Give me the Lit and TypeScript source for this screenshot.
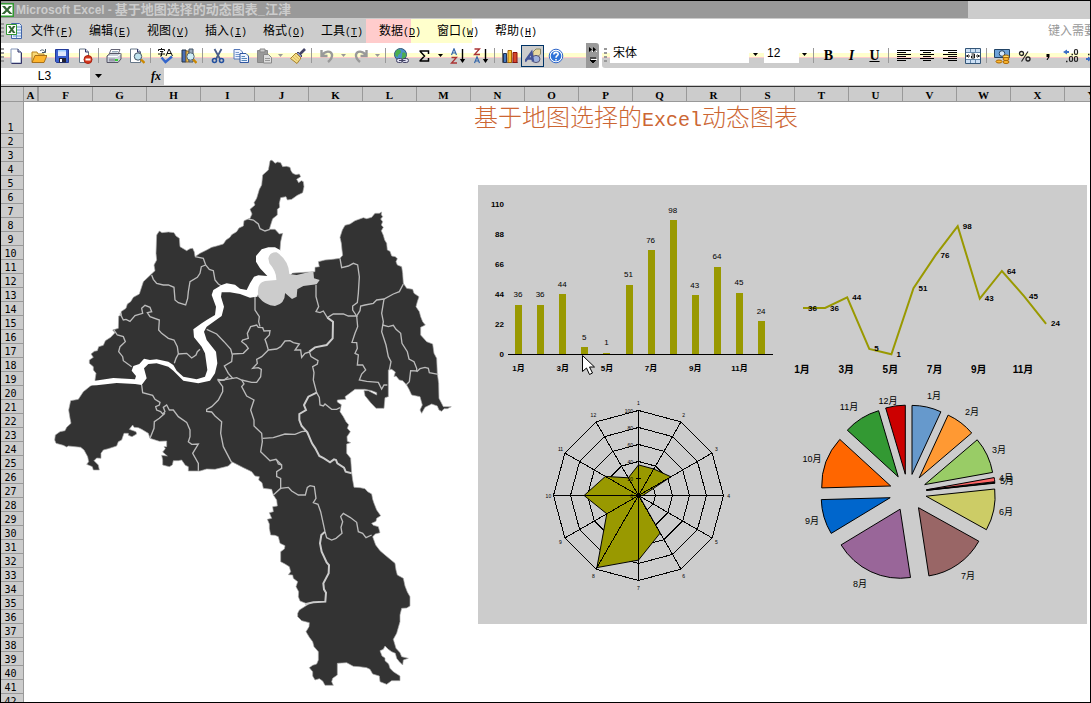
import { LitElement, html, svg, css } from "lit";
import { customElement } from "lit/decorators.js";

const VALUES = [36, 36, 44, 5, 1, 51, 76, 98, 43, 64, 45, 24];
const OLIVE = "#999900";

/* ---------- toolbar glyphs, each on a 16 x 16 grid ---------- */
const GLYPHS: Record<string, unknown> = {
  new: svg`<path d="M3 1h7l3 3v11H3z" fill="#fff" stroke="#8496b8"/><path d="M13.500 4.500v11H3.500" fill="none" stroke="#336"/><path d="M10 1v3h3" fill="#cde" stroke="#336"/>`,
  open: svg`<path d="M1 4h5l1 2h6v8H1z" fill="#f9d978" stroke="#b98320"/><path d="M1 14.500l3-7h12l-3 7z" fill="#fdb52e" stroke="#a8701a"/><path d="M9 3c2-2 4-1 5 1M14.500 1v3.500H11" fill="none" stroke="#456"/>`,
  save: svg`<path d="M1.500 1.500h13v13h-12l-1-1z" fill="#3a5fcd" stroke="#223a99"/><path d="M4 2h8v6H4z" fill="#dfe8fb"/><path d="M4 2h8v1.500H4z" fill="#9cf"/><path d="M5 10h7v4.500H5z" fill="#223"/><path d="M6 11h2v3H6z" fill="#fff"/>`,
  permit: svg`<path d="M2.500 1h6l3 3v10.500h-9z" fill="#fff" stroke="#678"/><path d="M8.500 1v3h3" fill="#cde" stroke="#336"/><circle cx="11" cy="11.500" r="4" fill="#d4381e" stroke="#a21"/><path d="M8.500 10.500h5v2h-5z" fill="#fff"/>`,
  print: svg`<path d="M5 1.500h9l-2 5H3z" fill="#fff" stroke="#667"/><path d="M6 3.500h6M5.500 5h6" stroke="#9ab"/><path d="M1 8l3-2.500h11V11l-3 3.500H1z" fill="#c9cfd8" stroke="#556"/><path d="M2 8.500h9.500l3-2.500" fill="none" stroke="#fff"/><path d="M3 10.500h6v3H3z" fill="#99a"/><path d="M9 11h3v2H9z" fill="#3c3"/>`,
  preview: svg`<path d="M1.500 1h7l3 3v10.500h-10z" fill="#fff" stroke="#678"/><path d="M8.500 1v3h3" fill="#cde" stroke="#336"/><circle cx="9" cy="8.500" r="3.700" fill="#bfe3ef" stroke="#456"/><path d="M12 11.500l3.500 3.500" stroke="#c80" stroke-width="2.400"/>`,
  spell: svg`<path d="M.5 3V1.500h6V3M2 3.500h3L3.500 5v3H2M0 6h7M3.500 0v1.500" fill="none" stroke="#111"/><path d="M8 8l3-7 3.500 7M9 5.500h4.500" fill="none" stroke="#111"/><path d="M3.500 9.500l4 4.500L14 8.500" fill="none" stroke="#36c" stroke-width="2.400"/>`,
  research: svg`<path d="M1 2h4v12H1z" fill="#4a6fb5" stroke="#234"/><path d="M5 3h3v11H5z" fill="#f0c04a" stroke="#863"/><path d="M8 1h4v13H8z" fill="#9ab" stroke="#456"/><circle cx="9.500" cy="8.500" r="3.700" fill="#cfeef5" stroke="#567"/><path d="M12.200 11.500l3.300 3.500" stroke="#c80" stroke-width="2.400"/>`,
  cut: svg`<path d="M4.500 1l5.500 10M11.500 1L6 11" fill="none" stroke="#4a5f88" stroke-width="1.800"/><circle cx="4.500" cy="12.500" r="2" fill="none" stroke="#23509e" stroke-width="1.600"/><circle cx="11.500" cy="12.500" r="2" fill="none" stroke="#23509e" stroke-width="1.600"/>`,
  copy: svg`<path d="M1 1.500h6l2.500 2.500v7H1z" fill="#eef3ff" stroke="#5578b8"/><path d="M2.500 4.500H6M2.500 6.500h5M2.500 8.500h5" stroke="#79c"/><path d="M7 5.500h6L15.500 8v6.500H7z" fill="#eef3ff" stroke="#2f569f"/><path d="M8.500 8.500H12M8.500 10.500h5.500M8.500 12.500h5.500" stroke="#58b"/>`,
  paste: svg`<path d="M1.500 2.500h10v12h-10z" fill="#999" stroke="#888"/><path d="M4 1h5v3H4z" fill="#ccc" stroke="#888"/><path d="M7.500 6.500h5l3 3v5.500h-8z" fill="#ddd" stroke="#888"/><path d="M9 10.500h5M9 12.500h5" stroke="#999"/>`,
  brush: svg`<path d="M15 1l-5 5" stroke="#446" stroke-width="2.600"/><path d="M8 4l4 4-1.500 1.500-4-4z" fill="#8a94c4" stroke="#446"/><path d="M6 5l5 5-4 5.500-6.500-5z" fill="#f5df8a" stroke="#a8812a"/><path d="M3 9l4.500 4M5 7.500l4.500 4" stroke="#dcb85a"/>`,
  undo: svg`<path d="M2.500 2v6h6M3 7.500C6 2.500 12 2.500 13 6.500c.5 3-1 5-4 7.500" fill="none" stroke="#999" stroke-width="2.400"/>`,
  redo: svg`<path d="M13.500 2v6h-6M13 7.500C10 2.500 4 2.500 3 6.500c-.5 3 1 5 4 7.500" fill="none" stroke="#999" stroke-width="2.400"/>`,
  link: svg`<circle cx="7.500" cy="6.500" r="6" fill="#4a90c8" stroke="#357"/><path d="M3 3c3-3 5-1 5 1s-3 2-3 4-3 0-3-2zM9 5c3-1 4 0 4 2s-3 5-4 4 1-3 0-6z" fill="#4cae4c"/><rect x="3.500" y="10.500" width="6" height="4" rx="2" fill="#dde" stroke="#446"/><rect x="9" y="10.500" width="6.500" height="4" rx="2" fill="#dde" stroke="#446"/><path d="M6 12.500h6.500" stroke="#446"/>`,
  sum: svg`<path d="M3.500 3h9v3M3.800 3l4.700 5-4.700 5M3.500 13h9v-3" fill="none" stroke="#000" stroke-width="1.500"/>`,
  az: svg`<path d="M1.500 7L4 .8 6.500 7M2.300 5h3.400" fill="none" stroke="#36a" stroke-width="1.200"/><path d="M1.500 9.500h5l-5 5.500h5.500" fill="none" stroke="#a33" stroke-width="1.300"/><path d="M12.500 1v12" stroke="#000" stroke-width="1.400"/><path d="M9.800 11h5.400l-2.700 4z"/>`,
  za: svg`<path d="M1.500 1h5l-5 5.500h5.500" fill="none" stroke="#a33" stroke-width="1.300"/><path d="M1.500 15L4 8.800 6.500 15M2.300 13h3.400" fill="none" stroke="#36a" stroke-width="1.200"/><path d="M12.500 1v12" stroke="#000" stroke-width="1.400"/><path d="M9.800 11h5.400l-2.700 4z"/>`,
  chart: svg`<path d="M.5 1v13.500H16" fill="none" stroke="#666"/><path d="M1.500 5.500h3v9h-3z" fill="#47b" stroke="#235"/><path d="M6 2.500h3.500v12H6z" fill="#f7c53c" stroke="#a60"/><path d="M11 4.500h4v10h-4z" fill="#d5482a" stroke="#811"/>`,
  draw: svg`<path d="M8 4l3-3h4.500v5l-3 3H8z" fill="#e8d9a0" stroke="#886"/><ellipse cx="11" cy="11" rx="4" ry="3.600" fill="#9fb2dd" stroke="#557"/><path d="M0 13.500L6.500 4.500 8 13.500M2.500 10.500h5" fill="none" stroke="#459" stroke-width="2.400"/>`,
  help: svg`<circle cx="8" cy="8" r="6.800" fill="#fff" stroke="#2c64c8"/><circle cx="8" cy="8" r="5.300" fill="#2f73d8"/><path d="M5.800 6.500C6 3.600 10.300 3.700 10.200 6.300 10.100 7.700 8 7.800 8 9.700M8 11v1.600" fill="none" stroke="#fff" stroke-width="1.600"/>`,
  left: svg`<path d="M1 2.500h14M1 4.500h9M1 6.500h14M1 8.500h9M1 10.500h14M1 12.500h9" stroke="#000"/>`,
  center: svg`<path d="M1 2.500h14M4 4.500h8M1 6.500h14M4 8.500h8M1 10.500h14M4 12.500h8" stroke="#000"/>`,
  right: svg`<path d="M1 2.500h14M6 4.500h9M1 6.500h14M6 8.500h9M1 10.500h14M6 12.500h9" stroke="#000"/>`,
  merge: svg`<path d="M.5.500h15v15H.5z" fill="#cde0f5" stroke="#357"/><path d="M1 4.500h14M1 11.500h14M5.500 1v3M10.500 1v3M5.500 12v3M10.500 12v3" stroke="#68a"/><path d="M1 5h14v6H1z" fill="#fff"/><path d="M1 8h4M11 8h4M3.500 6.500L2 8l1.500 1.500M12.500 6.500L14 8l-1.500 1.500M6.500 6h3v4h-3V8h3" fill="none" stroke="#111"/>`,
  money: svg`<path d="M.5 1.500h15v8H.5z" fill="#6fa3d8" stroke="#246"/><circle cx="8" cy="5.500" r="2.800" fill="#d5e8f8" stroke="#246"/><ellipse cx="12" cy="8.500" rx="3" ry="1.500" fill="#fd6" stroke="#a60"/><ellipse cx="12" cy="11" rx="3" ry="1.500" fill="#fb3" stroke="#a60"/><ellipse cx="12" cy="14" rx="3" ry="1.500" fill="#fb3" stroke="#a60"/><ellipse cx="5" cy="13.500" rx="3" ry="1.500" fill="#fb3" stroke="#a60"/>`,
  percent: svg`<circle cx="4.500" cy="5.500" r="2" fill="none" stroke="#222" stroke-width="1.300"/><circle cx="11" cy="11" r="2" fill="none" stroke="#222" stroke-width="1.300"/><path d="M11 3.500l-6.500 10" stroke="#222" stroke-width="1.100"/>`,
  comma: svg`<path d="M6.500 6h3v3l-2 3h-1L8 9H6.500z"/>`,
  decimal: svg`<path d="M4 1.500L0 4l4 2.500V5h2V3H4z" fill="#3b6fc4"/><path d="M8.500 6.500H10M3 13.500h1.500" stroke="#222" stroke-width="1.500"/><rect x="11.500" y="1.500" width="3" height="5" rx="1.400" fill="none" stroke="#222" stroke-width="1.200"/><rect x="6.500" y="8.500" width="3" height="5" rx="1.400" fill="none" stroke="#222" stroke-width="1.200"/><rect x="11.500" y="8.500" width="3" height="5" rx="1.400" fill="none" stroke="#222" stroke-width="1.200"/>`,
  fewer: svg`<path d="M2 8.500L6 11l-4 2.500V12H0v-2h2z" fill="#3b6fc4"/><path d="M2 6.500h1.500" stroke="#222" stroke-width="1.500"/><rect x="6.500" y="1.500" width="3" height="5" rx="1.400" fill="none" stroke="#222" stroke-width="1.200"/><rect x="11.500" y="1.500" width="3" height="5" rx="1.400" fill="none" stroke="#222" stroke-width="1.200"/>`,
};

type Tool = [kind: "b" | "s" | "d" | "sel" | "dim", id?: string, label?: string];
const STANDARD: Tool[] = [
  ["b", "new", "新建"], ["b", "open", "打开"], ["b", "save", "保存"], ["b", "permit", "权限"], ["s"],
  ["b", "print", "打印"], ["b", "preview", "打印预览"], ["s"],
  ["b", "spell", "拼写检查"], ["b", "research", "信息检索"], ["s"],
  ["b", "cut", "剪切"], ["b", "copy", "复制"], ["b", "paste", "粘贴"], ["dim", "", "粘贴选项"], ["b", "brush", "格式刷"], ["s"],
  ["b", "undo", "撤消"], ["dim", "", "撤消列表"], ["b", "redo", "恢复"], ["dim", "", "恢复列表"], ["s"],
  ["b", "link", "超链接"], ["b", "sum", "自动求和"], ["d", "", "求和选项"], ["b", "az", "升序"], ["b", "za", "降序"], ["s"],
  ["b", "chart", "图表向导"], ["sel", "draw", "绘图"], ["b", "help", "帮助"],
];

const ALIGNMENT: Tool[] = [
  ["b", "left", "左对齐"], ["b", "center", "居中"], ["b", "right", "右对齐"], ["b", "merge", "合并及居中"], ["s"],
  ["b", "money", "货币样式"], ["b", "percent", "百分比样式"], ["b", "comma", "千位分隔样式"],
  ["b", "decimal", "增加小数位数"], ["b", "fewer", "减少小数位数"],
];

const MENUS = [
  ["文件", "F"], ["编辑", "E"], ["视图", "V"], ["插入", "I"], ["格式", "O"],
  ["工具", "T"], ["数据", "D"], ["窗口", "W"], ["帮助", "H"],
];

const COLUMNS = "FGHIJKLMNOPQRSTUVWXY".split("");

/* ---------- map data: stretches digitised per tile, in thirds of a pixel ---------- */
type Stretch = [tile: keyof typeof TILES, points: string];
const TILES = { nw: [120, 450], ne: [720, 450], sw: [120, 1110], se: [690, 1200] };

const place = ([tile, points]: Stretch) => {
  const [dx, dy] = TILES[tile];
  return points
    .split(" ")
    .map((p) => p.split(",").map(Number))
    .map(([x, y]) => `${x + dx},${y + dy}`)
    .join(" ");
};

const OUTLINE: Stretch[] = [
  ["ne", "93,30 99,33 105,40 113,36 122,38 128,50 139,49 150,52 153,62 158,70 168,74 178,72 182,80 170,88 176,98 184,92 190,95 192,110 188,128 172,136 155,148 142,150 138,140 122,143 118,160 119,172 112,178 112,195 98,206 92,225 88,238 105,238 118,252 128,250 125,262 122,275 120,300 148,370 225,365 225,352 238,350 235,335 255,330 278,328 300,325 308,316 306,300 304,280 300,262 307,240 315,226 330,222 345,212 370,203 380,206 395,202 405,190 418,190 425,186 424,194 428,200 422,207 428,215 424,225 430,232 424,242 430,256 434,270 440,280 442,300 450,304 455,318 466,320 472,326 468,335 472,345 485,350 488,370 490,400 500,415 518,418 522,430 537,440 532,455 528,470 538,485 542,500 548,515 556,525 542,532 542,555 560,575 578,582 582,610 590,625 592,670 596,700 597,745 610,770 634,770 622,776 612,776 605,784 597,780 592,768 575,762 555,772 545,790 540,780 547,765 540,740 515,735 507,718 500,705 488,692 478,690 468,678 462,680 466,666 455,658 445,660 445,740 435,743 432,775 408,775 392,758 375,737 372,722 385,722 410,735 410,728 395,722 375,718 345,718 325,733 315,740 318,748 292,750 292,756 304,764 300,785 310,800 318,815"],
  ["se", "348,65 356,74 352,85 361,95 351,110 352,124 362,128 350,132 350,160 362,175 365,218 368,240 372,262 390,263 405,266 413,275 425,282 428,298 432,310 440,330 452,347 440,355 438,364 425,370 430,376 445,380 450,398 436,402 428,410 437,435 450,452 465,465 495,490 498,510 502,525 520,535 525,558 532,576 540,590 540,618 530,624 515,625 510,645 510,665 500,700 490,718 498,745 510,758 515,770 535,775 520,780 518,795 508,785 500,775 496,760 485,755 475,748 465,738 460,748 450,752 456,768 465,774 465,782 476,792 480,805 490,815 510,828 510,842 485,842 470,853 450,845 448,828 428,822 420,808 410,803 388,800 370,799 350,788 322,790 322,825 308,835 305,845 310,856 285,856 278,843 268,836 255,840 248,828 248,815 238,803 248,796 260,792 265,780 265,755 252,740 248,725 238,712 228,695 237,680 238,668 215,662 203,650 203,640 208,630 235,613 210,603 205,590 206,575 198,560 203,545 190,535 188,525 175,524 182,515 178,500 165,492 152,485 152,455 163,447 165,437 150,430 145,410 135,406 122,405 118,385 118,372 112,358 125,355 118,338 130,335 128,320 142,318 140,300 130,285 125,268 100,265 96,248 86,240 88,230 75,228 65,215 40,203 5,185"],
  ["sw", "575,278 565,288 550,292 525,298 500,297 480,303 445,303 445,290 436,286 425,270 415,272 400,272 397,285 388,290 368,285 368,270 365,256 382,258 368,246 376,236 372,230 380,230 380,213 358,214 330,205 325,190 305,178 295,173 282,172 278,165 268,178 288,185 290,192 276,200 265,196 265,190 252,190 245,210 235,215 230,228 205,236 190,240 183,250 183,265 170,264 162,272 175,285 178,300 160,300 157,290 140,283 146,275 143,260 132,240 122,232 85,228 80,231 70,226 48,220 44,210 46,195 60,185 75,182 80,172 93,160 90,145 86,120 92,92 115,88 130,65 155,45 165,40"],
  ["nw", "165,690 168,670 160,660 160,650 148,640 148,630 160,622 153,612 163,604 172,602 176,590 190,586 196,572 212,562 225,548 218,540 235,535 236,498 245,496 243,485 258,475 262,462 272,455 280,442 298,432 310,395 328,378 345,362 342,345 350,330 348,310 350,255 358,243 366,248 385,246 402,248 408,258 418,265 420,290 440,302 450,296 458,295 463,306 465,320 480,310 500,300 515,292 530,288 550,282 558,270 570,262 575,254 590,245 597,234 610,228 612,212 630,205 636,192 630,178 645,165 642,158 650,145 658,118 665,105 668,75 685,60 690,33"],
];

const BORDERS: Stretch[] = [
  ["nw", "625,207 640,210 655,222 660,236 675,243 690,238"],
  ["nw", "465,320 490,325 497,345 508,358 520,362 525,390 535,402 545,408"],
  ["nw", "497,345 484,350 480,370 472,382 450,395 445,425 443,445 437,465 415,458 405,450 402,412 385,405 370,405 350,400 340,388 335,375"],
  ["nw", "240,490 250,510 258,508 270,514 285,497 308,490 305,475 315,466 330,472 335,485 322,488 330,500 358,510 356,540 365,550 385,565 402,570 412,590 415,612 408,625 403,640"],
  ["nw", "415,612 440,610 455,624 468,615 472,605 480,598"],
  ["nw", "222,540 232,555 250,560 256,575 240,590 236,605 248,620 250,632 275,650"],
  ["nw", "500,538 530,552 552,575 572,597 577,615 575,635 553,648 565,670 578,685 548,690 532,688"],
  ["nw", "577,612 610,610 625,595 618,585 605,575 608,570 625,565 622,550 632,530 650,525 655,532 668,533 672,543 690,542 688,555 675,568 680,582 685,600 665,620 650,628 652,640 638,655 655,653 664,658 662,680 650,697 635,697 605,690 590,683 578,685"],
  ["nw", "645,440 645,480 658,500 656,515 660,530"],
  ["nw", "685,600 710,597 722,590 735,573 750,572 760,578 778,582 765,600 782,600 785,622 795,610 808,606"],
  ["ne", "228,405 228,440 236,470 228,485 240,488 250,483 262,503 280,492 310,492 325,498 350,498 338,480 338,468 352,458 355,430 358,380 353,345 340,340 325,348 305,353 300,325"],
  ["ne", "350,498 360,482 362,468 375,465 400,460 410,450 432,447 460,432 478,425 490,402"],
  ["ne", "350,498 353,530 345,550 336,577 350,578 352,595 345,610 355,615 352,645 368,645 377,660 365,672 358,690 380,694 415,697 425,717 432,705 442,705"],
  ["ne", "432,447 425,490 430,515 425,545 438,585 445,620 453,635 448,660"],
  ["ne", "428,525 445,530 460,526 468,538 482,550 486,580 502,605 507,627 522,635 530,655 530,663 512,662 508,695 498,705"],
  ["ne", "530,665 540,656 555,652 565,655 568,668 595,673"],
  ["ne", "208,605 213,620 234,632 232,642 218,650 222,668 220,690 230,728 238,742 240,765 250,768 255,762 275,778 290,778 300,773"],
  ["se", "98,115 130,113 165,102 195,103 215,95 230,93"],
  ["sw", "605,30 612,42 605,50 620,78 642,90 632,120 642,150 642,168 665,190 667,215 662,245 690,272 708,268 725,285"],
  ["se", "140,180 145,192 155,195 155,205 140,215 140,230 152,235 152,265 130,285"],
  ["se", "150,265 175,262 185,273 205,285 226,285 232,262 240,257 253,260 258,295 250,308 264,313 272,335 285,395 290,413 305,420 318,415 336,400 333,382 338,365 332,350 340,340 360,352 380,367 385,395 398,400 408,413 425,405"],
  ["sw", "565,20 552,30 535,32 548,50 548,65 535,90 515,110 500,118 500,124 515,126 525,138 545,155 542,190 550,230 575,278"],
  ["sw", "305,45 308,68 338,76 345,88 360,97 358,105 347,110 350,120 362,125 368,132 375,125 370,112 380,105 388,120 400,120 415,140 440,157 450,180 450,200 445,215 455,223 475,222 458,250 475,280 475,302"],
  ["sw", "375,130 358,145 343,155 342,175 330,205"],
];

const WIDE_BORDERS: Stretch[] = [
  ["ne", "208,605 225,592 260,585 278,565 279,515 262,503"],
  ["se", "260,-22 235,-10 222,15 228,30 208,42 208,60 215,78 232,97 246,130 256,145 268,168 282,175 300,187 312,178 318,180 322,190 342,203 347,215 365,220"],
  ["se", "285,395 274,405 270,430 275,455 290,487 297,495 296,520 280,550 282,568 288,578 286,605 250,607 225,613"],
];

const RIVER: Stretch = ["nw", "135,690 165,692 220,684 285,688 288,678 275,662 280,648 298,642 312,626 330,630 350,628 385,635 400,645 410,662 430,680 470,688 495,680 502,660 495,610 485,590 462,562 460,538 485,520 500,510 525,495 528,470 515,435 520,420 545,405 560,400 585,404 600,416 620,420 630,400 642,380 655,376 682,378 660,355 648,335 648,318 665,298 685,292 705,292 720,300 780,340 740,390 700,400 660,410 652,440 630,443 600,432 570,427 545,427 543,440 552,470 545,498 525,512 500,530 492,545 500,570 528,605 532,640 525,670 510,692 475,700 430,692 400,662 385,650 350,640 325,642 312,655 320,685 305,705 285,702 230,699 170,706 135,707"];

const LAKE = "M805 775 Q810 755 830 757 Q866 780 868 822 L890 825 L940 813 L942 835 L959 840 L950 853 L910 858 L892 868 L890 890 L876 897 L855 879 Q856 910 825 918 Q795 916 775 890 Q768 848 795 843 L829 840 Q830 815 808 790Z";

const px = (n: number) => Math.round(n * 10) / 10;

@customElement("region-map")
export class RegionMap extends LitElement {
  static styles = css`
    :host { display: block; }
    svg { display: block; width: 100%; }
    .land { fill: #333; stroke: #aaa; stroke-width: 2; }
    .river { fill: #fff; }
    .edge { fill: none; stroke: #bbb; stroke-width: 4; }
    .wide { fill: none; stroke: #ccc; stroke-width: 6; }
    .lake { fill: #ccc; }
  `;
  render() {
    return html`<svg viewBox="72 306 1350 1800" role="img" aria-label="地图">
      <polygon class="land" points=${OUTLINE.map(place).join(" ")} />
      ${BORDERS.map((b) => svg`<polyline class="edge" points=${place(b)} />`)}
      ${WIDE_BORDERS.map((b) => svg`<polyline class="wide" points=${place(b)} />`)}
      <polygon class="river" points=${place(RIVER)} />
      <path class="lake" d=${LAKE} />
    </svg>`;
  }
}

@customElement("chart-panel")
export class ChartPanel extends LitElement {
  static styles = css`
    :host {
      display: grid;
      grid-template-columns: 305fr 304fr;
      background: #ccc;
      font-family: "Liberation Sans", "Noto Sans CJK SC", sans-serif;
    }
    svg { display: block; width: 100%; }
    text { fill: #000; dominant-baseline: central; }
    .mid { text-anchor: middle; }
    .end { text-anchor: end; }
    .s5 { font-size: 5px; }
    .s8 { font-size: 8px; }
    .s9 { font-size: 9px; }
    .s10 { font-size: 10px; }
    .bold { font-weight: 700; }
    .axis { stroke: #000; shape-rendering: crispEdges; fill: none; }
    .bar { fill: #990; shape-rendering: crispEdges; }
    .slice { stroke: #000; stroke-width: 1; }
  `;

  private bars() {
    const y = (v: number) => 354 - (v * 30) / 22;
    const x = (i: number) => 518.5 + i * 22.1;
    return html`<svg viewBox="478 185 305 200" role="img" aria-label="柱形图">
      ${[0, 22, 44, 66, 88, 110].map((v) => svg`<text class="end s8 bold" x="504" y=${y(v)}>${v}</text>`)}
      ${VALUES.map((v, i) => svg`
        <rect class="bar" x=${px(x(i) - 3.5)} y=${px(y(v))} width="7" height=${px(354 - y(v))} />
        <text class="mid s8" x=${px(x(i) - 0.5)} y=${px(y(v) - 10)}>${v}</text>`)}
      ${[0, 2, 4, 6, 8, 10].map((i) => svg`<text class="mid s8 bold" x=${px(x(i))} y="368">${i + 1}月</text>`)}
      <path class="axis" d="M508 354.500H773" />
      <path d="M582.500 355.500v16l4-3.500 3 6.500 3-1.500-3-6h5z" fill="#fff" stroke="#000" />
    </svg>`;
  }

  private line() {
    const y = (v: number) => px(355.5 - v * 1.32);
    const x = (i: number) => px(803 + i * 22.1);
    return html`<svg viewBox="783 185 304 200" role="img" aria-label="折线图">
      <polyline points=${VALUES.map((v, i) => `${x(i)},${y(v)}`).join(" ")} fill="none" stroke=${OLIVE} stroke-width="2" />
      ${VALUES.map((v, i) => svg`<text class="s8 bold" x=${x(i) + 5} y=${y(v)}>${v}</text>`)}
      ${[0, 2, 4, 6, 8, 10].map((i) => svg`<text class="mid s10 bold" x=${x(i) - 1} y="369">${i + 1}月</text>`)}
    </svg>`;
  }

  private radar() {
    const at = (i: number, v: number) => {
      const a = (i * Math.PI) / 6;
      return [px(638.5 + Math.sin(a) * v * 0.85), px(495.5 - Math.cos(a) * v * 0.85)];
    };
    const ring = (v: number) => VALUES.map((_, i) => at(i, v).join(",")).join(" ");
    return html`<svg viewBox="478 385 305 239" role="img" aria-label="雷达图">
      ${[20, 40, 60, 80, 100].map((v) => svg`<polygon class="axis" points=${ring(v)} />`)}
      <polygon points=${VALUES.map((v, i) => at(i, v).join(",")).join(" ")} fill=${OLIVE} stroke="#000" />
      ${VALUES.map((_, i) => svg`<line class="axis" x1="638.500" y1="495.500" x2=${at(i, 100)[0]} y2=${at(i, 100)[1]} />`)}
      ${[0, 20, 40, 60, 80, 100].map((v) => svg`
        <path class="axis" d=${`M636 ${at(0, v)[1]}h5`} />
        <text class="end s5" x="633" y=${at(0, v)[1]}>${v}</text>`)}
      <circle cx="638.500" cy="495.500" r="2" />
      ${VALUES.map((_, i) => svg`<text class="mid s5" x=${at(i, 106)[0]} y=${at(i, 109)[1]}>${i + 1}</text>`)}
    </svg>`;
  }

  private pie() {
    const fills = ["#69c", "#f93", "#9c6", "#f66", "#000", "#cc6", "#966", "#969", "#06c", "#f60", "#393", "#c00"];
    const labels = [[934, 396], [972, 412], [999, 450], [1006, 478], [1007, 481], [1006, 512], [968, 576], [860, 584], [812, 521], [812, 459], [849, 407], [888, 401]];
    const total = VALUES.reduce((a, b) => a + b, 0);
    let sum = 0;
    const slices = VALUES.map((v, i) => {
      const a = (sum / total) * 2 * Math.PI;
      sum += v;
      const b = (sum / total) * 2 * Math.PI;
      const m = (a + b) / 2;
      const cx = 908 + Math.sin(m) * 18.5;
      const cy = 492.5 - Math.cos(m) * 18.5;
      const p = (t: number) => `${px(cx + Math.sin(t) * 69)} ${px(cy - Math.cos(t) * 69)}`;
      return svg`<path class="slice" fill=${fills[i]} d=${`M${px(cx)} ${px(cy)}L${p(a)}A69 69 0 0 1 ${p(b)}Z`} />`;
    });
    return html`<svg viewBox="783 385 304 239" role="img" aria-label="饼图">
      ${slices}
      ${labels.map(([x, y], i) => svg`<text class="mid s9" x=${x} y=${y}>${i + 1}月</text>`)}
    </svg>`;
  }

  render() {
    return html`${this.bars()}${this.line()}${this.radar()}${this.pie()}`;
  }
}

@customElement("app-root")
export class AppRoot extends LitElement {
  static styles = css`
    * { box-sizing: border-box; }
    :host {
      display: flex;
      flex-direction: column;
      box-sizing: border-box;
      height: 100vh;
      overflow: hidden;
      border: 1px solid #000;
      background: #fff;
      color: #000;
      font: 12px/16px "Liberation Sans", "Noto Sans CJK SC", sans-serif;
    }
    button, input, select { margin: 0; padding: 0; border: 0; background: none; color: inherit; font: inherit; border-radius: 0; }
    svg { display: block; }

    .title { flex: none; display: flex; align-items: center; height: 18px; background: linear-gradient(to right, #999 967px, #ccc 967px); border-bottom: 1px solid #ccc; color: #ccc; font-size: 12px; font-weight: 700; white-space: pre; }
    .title h1 { display: flex; gap: 3px; margin: 0 0 0 2px; font-size: inherit; line-height: 16px; }
    .title .name { font-size: 13px; }

    .menu { flex: none; display: flex; align-items: center; height: 24px; background: linear-gradient(to right, #ccc 365px, #fcc 365px 410px, #ffc 410px 471px, #fff 471px); }
    .menu button { width: 58px; height: 20px; white-space: nowrap; line-height: 20px; }
    .menu .key { font-family: "Liberation Mono", monospace; font-size: 10px; }
    .menu nav { display: flex; flex: 1; }
    .menu .ask { width: 42px; height: 20px; color: #999; line-height: 20px; }
    .grip { flex: none; width: 3px; height: 16px; background: repeating-linear-gradient(#999 0 2px, transparent 2px 4px); }
    .menu .logo { margin: 0 1px 0 2px; }

    .bars { flex: none; display: flex; height: 25px; overflow: hidden; }
    .bar { flex: none; display: flex; align-items: center; background: linear-gradient(#fff 10px, #ffc 10px 14px, #fcc 14px 15px, #ccc 15px); }
    .tool { flex: none; display: flex; align-items: center; justify-content: center; width: 23px; height: 22px; }
    .tool.on { background: #ccc; border: 1px solid #036; }
    .drop { flex: none; display: flex; align-items: center; justify-content: center; width: 11px; height: 22px; }
    .dim { color: #999; }
    .sep { flex: none; width: 6px; height: 15px; background: linear-gradient(to right, transparent 2px, #999 2px 3px, transparent 3px); }
    .more { width: 13px; height: 25px; margin-left: 19px; background: #999; border-radius: 0 3px 3px 0; display: flex; align-items: center; justify-content: center; }
    .format { flex: 1 0 auto; margin-left: 3px; border-bottom-left-radius: 3px; padding-left: 2px; }
    .format .grip { margin-right: 3px; }
    .pick { position: relative; align-self: flex-start; height: 20px; }
    .pick select { appearance: none; height: 20px; padding-left: 3px; line-height: 20px; }
    .pick .arrow { position: absolute; right: 4px; top: 10px; pointer-events: none; }
    .pick .face { width: 152px; background: linear-gradient(to right, #fff 139px, transparent 139px); }
    .pick .size { width: 47px; margin-left: 2px; background: linear-gradient(to right, #fff 35px, transparent 35px); }
    .letter { font: 700 14px/22px "Liberation Serif", serif; }
    .italic { font-style: italic; }
    .under { text-decoration: underline; }

    .formula { flex: none; display: flex; height: 18px; background: #ccc; border-bottom: 1px solid #ccc; }
    .formula .cell { width: 89px; height: 16px; padding-right: 2px; background: #fff; text-align: center; }
    .formula .open { display: flex; align-items: center; justify-content: center; width: 16px; height: 16px; }
    .formula .fx { flex: none; width: 58px; padding-right: 3px; text-align: right; font: italic 700 12px/16px "Liberation Serif", serif; }
    .formula .entry { flex: 1; min-width: 0; background: #fff; }

    .heads { flex: none; display: flex; height: 16px; border-top: 1px solid #333; background: #ccc; border-bottom: 1px solid #999; font: 700 11px/16px "Liberation Serif", serif; text-align: center; overflow: hidden; }
    .heads div { flex: none; width: 54px; border-right: 1px solid #999; }
    .heads .corner { width: 23px; }
    .heads .first { width: 15px; border-right-width: 2px; }

    .sheet { flex: 1; min-height: 0; display: flex; overflow: hidden; }
    .rows { flex: none; width: 23px; background: #ccc; border-right: 1px solid #999; margin: 0; padding: 0; list-style: none; font: 10px/10px "DejaVu Sans Mono", monospace; text-align: center; }
    .rows li { display: flex; align-items: flex-end; justify-content: center; height: 14px; padding-right: 3px; border-bottom: 1px solid #999; }
    .rows li:first-child { height: 32px; }
    .canvas { flex: 1; min-width: 0; display: grid; grid-template-columns: 450fr 616fr; align-items: start; }
    .report { min-width: 0; }
    .report h2 { height: 83px; margin: 0; color: #c63; font-family: "Liberation Mono", "Noto Sans CJK SC", monospace; font-size: 24px; font-weight: 300; line-height: 36px; white-space: nowrap; }
    .report .latin { font-size: 20px; }
    .report chart-panel { margin: 0 3px 0 4px; }
  `;

  private arrow(cls = "") {
    return html`<svg class=${cls} width="5" height="3" viewBox="0 0 5 3"><path d="M0 0h5L2.500 3z" fill="currentColor" /></svg>`;
  }

  private glyph(id: string) {
    return html`<svg width="16" height="16" viewBox="0 0 16 16">${GLYPHS[id]}</svg>`;
  }

  private tool([kind, id = "", label = ""]: Tool) {
    if (kind === "s") return html`<span class="sep"></span>`;
    if (kind === "d") return html`<button class="drop" aria-label=${label}>${this.arrow()}</button>`;
    if (kind === "dim") return html`<button class="drop dim" aria-label=${label}>${this.arrow()}</button>`;
    return html`<button class=${kind === "sel" ? "tool on" : "tool"} aria-label=${label}>${this.glyph(id)}</button>`;
  }

  render() {
    const rows = Array.from({ length: 42 }, (_, i) => i + 1);
    return html`
      <header class="title">
        <svg width="13" height="14" viewBox="0 0 13 14"><path d="M0 .5h12.500v13H0" fill="#fff" stroke="#393" stroke-width="2" /><path d="M1 3h3l2 2.500L8 3h3L7.500 7l4 4h-3L6 8.500 3.500 11H.5l4-4z" fill="#363" /></svg>
        <h1><span>Microsoft Excel</span><span>-</span><span class="name">基于地图选择的动态图表_江津</span></h1>
      </header>

      <div class="menu">
        <span class="grip"></span>
        <svg class="logo" width="16" height="17" viewBox="0 0 16 17"><path d="M5.500.5h8l2 2v13h-10z" fill="#e8f0ff" stroke="#46a" /><path d="M11 4h4M11 7h4M7 10h8M7 13h8M10.500 8v7" stroke="#69c" /><path d="M.5 1.500h10v10H.5z" fill="#fff" stroke="#393" /><path d="M2 3h2.500l1.300 2L7 3h2.500L7 6.500 9.500 10H7L5.700 8 4.500 10H2l2.500-3.500z" fill="#363" /></svg>
        <nav>
          ${MENUS.map(([t, k]) => html`<button>${t}<span class="key">(<u>${k}</u>)</span></button>`)}
        </nav>
        <input class="ask" type="text" aria-label="帮助" .value=${"键入需要"} />
      </div>

      <div class="bars">
        <div class="bar">
          <span class="grip"></span>
          ${STANDARD.map((t) => this.tool(t))}
          <button class="more" aria-label="工具栏选项">
            <svg width="9" height="17" viewBox="0 0 9 17"><path d="M1 0l3 2.500L1 5zM5 0l3 2.500L5 5z" fill="#000" /><path d="M4 5l1-1M8 5l1-1" stroke="#fff" /><path d="M2 11h6M2 13l3 3 3-3z" fill="#000" stroke="#000" /><path d="M3 12.500h6" stroke="#fff" /></svg>
          </button>
        </div>
        <div class="bar format">
          <span class="grip"></span>
          <div class="pick">
            <select class="face" aria-label="字体"><option>宋体</option></select>${this.arrow("arrow")}
          </div>
          <div class="pick">
            <select class="size" aria-label="字号"><option>12</option></select>${this.arrow("arrow")}
          </div>
          <span class="sep"></span>
          <button class="tool letter">B</button>
          <button class="tool letter italic">I</button>
          <button class="tool letter under">U</button>
          <span class="sep"></span>
          ${ALIGNMENT.map((t) => this.tool(t))}
        </div>
      </div>

      <div class="formula">
        <input class="cell" type="text" aria-label="名称框" .value=${"L3"} />
        <button class="open" aria-label="名称列表"><svg width="7" height="4" viewBox="0 0 7 4"><path d="M0 0h7L3.500 4z" /></svg></button>
        <span class="fx">fx</span>
        <input class="entry" type="text" aria-label="编辑栏" />
      </div>

      <div class="heads">
        <div class="corner"></div>
        <div class="first">A</div>
        ${COLUMNS.map((c) => html`<div>${c}</div>`)}
      </div>

      <main class="sheet">
        <ol class="rows">${rows.map((r) => html`<li>${r}</li>`)}</ol>
        <div class="canvas">
          <region-map></region-map>
          <section class="report">
            <h2>基于地图选择的<span class="latin">Excel</span>动态图表</h2>
            <chart-panel></chart-panel>
          </section>
        </div>
      </main>
    `;
  }
}
